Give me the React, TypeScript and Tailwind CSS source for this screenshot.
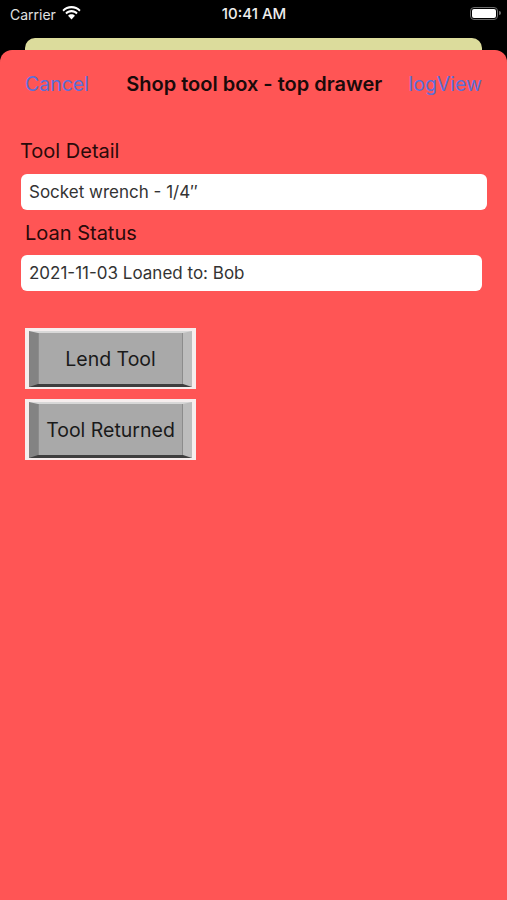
import React from "react";

const font = "font-['Inter','Liberation_Sans',sans-serif]";

function StatusBar() {
  return (
    <div className="flex h-[28px] items-center justify-between pl-[10px] pr-[6px] pt-[1px] text-white">
      <div className="flex w-[150px] items-center gap-[6px]">
        <span className="text-[14px] text-[#e0e0e0]">Carrier</span>
        <svg className="-mt-[3px]" width="19" height="14" viewBox="0 0 19 14" fill="#fff">
          <path d="M9.5 2.2c3 0 5.8 1.2 7.8 3.2l1.3-1.4C16.200 1.600 13 0 9.500 0S2.800 1.600.4 4l1.300 1.400c2-2 4.800-3.200 7.800-3.200z" />
          <path d="M9.500 6.200c1.900 0 3.600.7 4.900 2l1.300-1.400C14 5.100 11.900 4.100 9.500 4.100S5 5.100 3.300 6.800l1.300 1.400c1.300-1.300 3-2 4.900-2z" />
          <path d="M9.500 8.300c-1.300 0-2.500.5-3.400 1.400l3.400 3.800 3.400-3.800c-.9-.9-2.100-1.400-3.400-1.400z" />
        </svg>
      </div>
      <span className="text-[15px] font-medium text-[#eeeeee]">10:41 AM</span>
      <div className="-mt-[3px] flex w-[153px] items-center justify-end">
        <div className="flex h-[13px] w-[28px] items-center rounded-[4px] border-[1.5px] border-[#6e6e6e] p-[1px]">
          <div className="h-full w-full rounded-[2px] bg-white" />
        </div>
        <div className="ml-[1px] h-[4px] w-[2px] rounded-r-sm bg-[#6e6e6e]" />
      </div>
    </div>
  );
}

function BevelButton({ label }: { label: string }) {
  return (
    <div className="h-[61px] w-[171px] border-x-[4px] border-b-[2px] border-t-[3px] border-[#f6eeee]">
      <div className="h-full w-full border-b-[3px] border-l-[9px] border-r-[9px] border-t-[2px] border-b-[#3e3e3e] border-l-[#838383] border-r-[#bdbdbd] border-t-[#d8d8d8]">
        <div className="flex h-full w-full items-center justify-center whitespace-nowrap border-x border-x-[#8c8c8c] bg-[#a9a9a9] pt-[3px] text-[19.5px] text-[#1a1a1a]">
          {label}
        </div>
      </div>
    </div>
  );
}

export default function App() {
  return (
    <div className={`${font} relative h-[900px] w-[507px] overflow-hidden bg-black`}>
      <StatusBar />
      <div className="mx-[25px] mt-[10px] h-[30px] rounded-t-[10px] bg-[#dcdc9c]" />
      <div className="absolute inset-x-0 bottom-0 top-[50px] rounded-t-[12px] bg-[#ff5555]">
        <div className="flex h-[68px] items-center justify-between pl-[25px] pr-[25px]">
          <span className="pt-[1px] text-[19.5px] text-[#5c6fd8]">Cancel</span>
          <span className="ml-[11px] text-[20px] font-semibold text-[#1a0a0a]">Shop tool box - top drawer</span>
          <span className="pt-[1px] text-[19.5px] text-[#5c6fd8]">logView</span>
        </div>
        <div className="flex flex-col pl-[21px] pt-[19px]">
          <div className="-ml-px h-[28px] text-[20px] leading-[28px] text-[#2a0a0a]">Tool Detail</div>
          <div className="mt-[9px] flex h-[36px] w-[466px] items-center rounded-[6px] bg-white pl-[8px] pt-px text-[17px] text-[#333]">
            Socket wrench - 1/4″
          </div>
          <div className="mt-[9px] h-[28px] pl-[4px] text-[20px] leading-[28px] text-[#2a0a0a]">Loan Status</div>
          <div className="mt-[8px] flex h-[36px] w-[461px] items-center rounded-[6px] bg-white pl-[8px] pt-[2px] text-[17px] text-[#333]">
            2021-11-03 Loaned to: Bob
          </div>
          <div className="mt-[37px] flex flex-col gap-[10px] pl-[4px]">
            <BevelButton label="Lend Tool" />
            <BevelButton label="Tool Returned" />
          </div>
        </div>
      </div>
    </div>
  );
}
